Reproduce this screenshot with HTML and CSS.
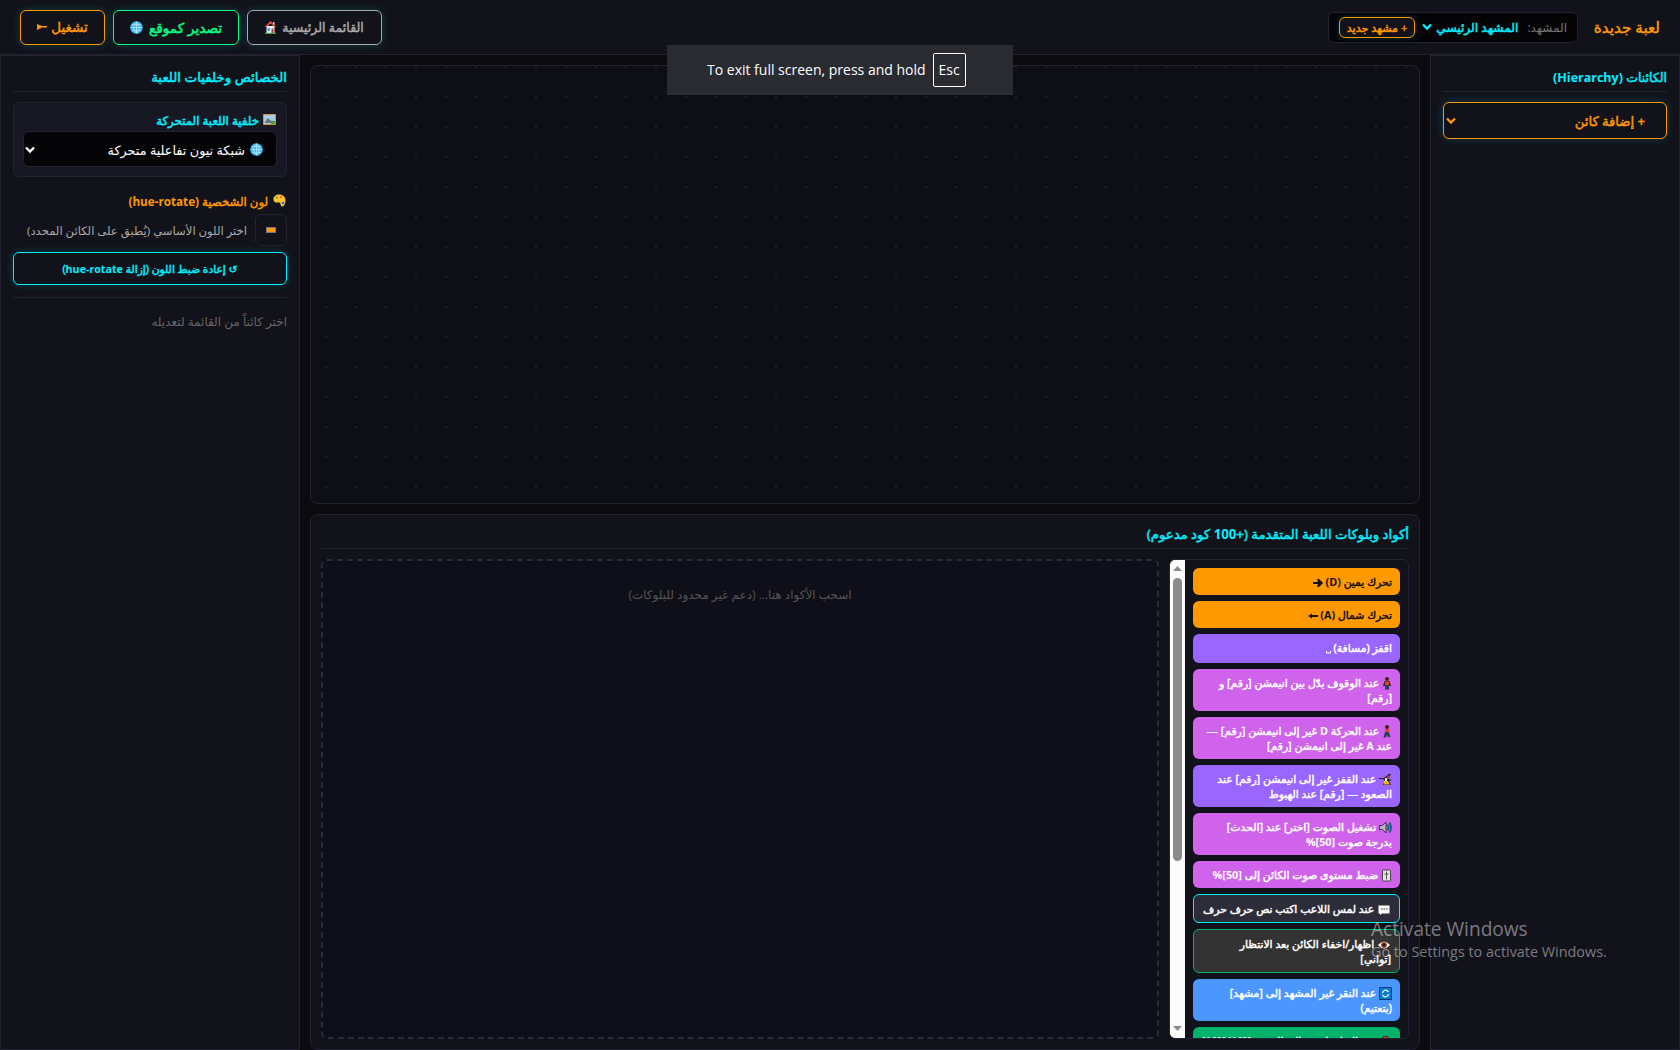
FILE: index.html
```html
<!DOCTYPE html>
<html lang="ar" dir="rtl">
<head>
    <meta charset="UTF-8">
    <title>لعبة جديدة</title>
    <link rel="stylesheet" href="styles.css">
</head>
<body>
    <svg class="defs" width="0" height="0">
        <symbol id="globe" viewBox="0 0 14 14">
            <circle cx="7" cy="7" r="6.8" fill="#35b5f0"/>
            <path d="M7 1v12M1 7h12M2 4h10M2 10h10M7 1C3 4 3 10 7 13M7 1c4 3 4 9 0 12" fill="none" stroke="#d5f2ff" stroke-width=".7"/>
        </symbol>
        <symbol id="chevron" viewBox="0 0 10 8">
            <path d="M1 1.500l4 4 4-4" fill="none" stroke="currentColor" stroke-width="2.300"/>
        </symbol>
    </svg>

    <header class="topbar">
        <div class="scene-side">
            <h1 class="game-title">لعبة جديدة</h1>
            <div class="scene-box">
                <span class="scene-label">المشهد:</span>
                <div class="scene-select"><span>المشهد الرئيسي</span><svg class="chev"><use href="#chevron"/></svg></div>
                <button class="new-scene">+ مشهد جديد</button>
            </div>
        </div>
        <div class="actions">
            <button class="btn btn-home"><span>القائمة الرئيسية</span>
                <svg class="ico-home" viewBox="0 0 11 13"><path d="M1.500 5h8v7h-8z" fill="#f4f4f4"/><path d="M8 1h1.500v4H8z" fill="#d8d8d8"/><path d="M0 5.500L5.500 0 11 5.500l-1 1-4.500-4-4.500 4z" fill="#e8503a"/><path d="M2.500 7h2.500v3H2.500z" fill="#3aa0dd"/><path d="M6.500 7.500h2V12h-2z" fill="#b33a2a"/><path d="M0 11.800h11V13H0z" fill="#37a35a"/></svg>
            </button>
            <button class="btn btn-export"><span>تصدير كموقع</span><svg class="ico"><use href="#globe"/></svg></button>
            <button class="btn btn-play"><span>تشغيل</span><svg class="ico-play" viewBox="0 0 10 6"><path d="M0 0l5 2h5v1.500H5L0 6z" fill="#ff9900"/></svg></button>
        </div>
    </header>

    <main class="workspace">
        <aside class="panel hierarchy">
            <h2 class="panel-title">الكائنات <b>(Hierarchy)</b></h2>
            <div class="add-object"><span>+ إضافة كائن</span><svg class="chev"><use href="#chevron"/></svg></div>
        </aside>

        <section class="center">
            <div class="stage"></div>
            <div class="code-box">
                <h2 class="code-title">أكواد وبلوكات اللعبة المتقدمة (+<b>100</b> كود مدعوم)</h2>
                <div class="code-body">
                    <div class="palette">
                        <div class="blocks">
                            <div class="block orange">تحرك يمين <b>(D)</b> <svg class="bi arrow" viewBox="0 0 10 8"><path d="M0 3h5L4 0h2l4 4-4 4H4l1-3H0z" fill="#111"/></svg></div>
                            <div class="block orange">تحرك شمال <b>(A)</b> <svg class="bi arrow" viewBox="0 0 10 8"><path d="M10 3H4V1.500L0 4l4 2.500V5h6z" fill="#111"/></svg></div>
                            <div class="block violet jump">اقفز (مسافة) <svg class="bi space" viewBox="0 0 5 3"><path d="M.5 0v2h4V0" fill="none" stroke="#fff"/></svg></div>
                            <div class="block pink"><svg class="bi man" viewBox="0 0 8 13"><circle cx="4" cy="2" r="2" fill="#3b2416"/><path d="M1.500 4h5L8 9H0z" fill="#3b2416"/><path d="M2 4.500h4V8H2z" fill="#d8442a"/><path d="M2 8h4v4.500H2z" fill="#24415f"/></svg> عند الوقوف بدّل بين انيمشن [رقم] و<br>[رقم]</div>
                            <div class="block pink"><svg class="bi man" viewBox="0 0 8 13"><circle cx="4" cy="2" r="2" fill="#3b2416"/><path d="M2 4h4v4H2z" fill="#d8442a"/><path d="M2 7h4l1.500 5H5L4 10l-1 2.500H.5z" fill="#24415f"/></svg> عند الحركة <b>D</b> غير إلى انيمشن [رقم] —<br>عند <b>A</b> غير إلى انيمشن [رقم]</div>
                            <div class="block violet"><svg class="bi" viewBox="0 0 13 13"><path d="M0 5h5l5-4h2L9 6l4 1-3 1 2 4H4l2-4-2-2H0z" fill="#2a2018"/><path d="M5 8h4l2 3.500H5z" fill="#f0b429"/><path d="M6 5h2v3H6z" fill="#f4eee0"/><path d="M8 4l2-2 0 2-2 2z" fill="#d94b30"/></svg> عند القفز غير إلى انيمشن [رقم] عند<br>الصعود — [رقم] عند الهبوط</div>
                            <div class="block pink"><svg class="bi" viewBox="0 0 13 12"><path d="M.5 4h3l3.500-3.500v11L3.500 8h-3z" fill="#b9b9b9" stroke="#222" stroke-width=".8"/><path d="M8.500 3q2 3 0 6M10.500 1q3 5 0 10" fill="none" stroke="#12607f" stroke-width="1.800"/></svg> تشغيل الصوت [اختر] عند [الحدث]<br>بدرجة صوت <b>[50]%</b></div>
                            <div class="block pink"><svg class="bi slider" viewBox="0 0 9 12"><rect x=".5" y=".5" width="8" height="11" rx="1" fill="#e4e4e4" stroke="#444"/><path d="M4.500 2v8M2.500 4.500h4" stroke="#555"/></svg> ضبط مستوى صوت الكائن إلى <b>[50]%</b></div>
                            <div class="block dark"><svg class="bi bubble" viewBox="0 0 12 10"><path d="M.5.500h11v8H4l-2 1.500V8.500H.5z" fill="#fff"/><path d="M3 4h1.500M5.500 4H7M8 4h1.500" stroke="#222" stroke-width="1.200"/></svg> عند لمس اللاعب اكتب نص حرف حرف</div>
                            <div class="block grey"><svg class="bi bubble" viewBox="0 0 12 10"><path d="M0 5q6-7 12 0-6 7-12 0z" fill="#fff"/><circle cx="6" cy="5" r="3" fill="#a34b25"/><circle cx="6" cy="5" r="1.400" fill="#111"/></svg> اظهار/اخفاء الكائن بعد الانتظار<br>[ثواني]</div>
                            <div class="block blue"><svg class="bi" viewBox="0 0 13 13"><path d="M.5.500h12v12H.5z" fill="#0b7bd0" stroke="#073d70"/><path d="M3.500 6a3 3 0 0 1 5-2l1 1M9.500 7a3 3 0 0 1-5 2l-1-1" fill="none" stroke="#fff" stroke-width="1.200"/></svg> عند النقر غير المشهد إلى [مشهد]<br>(بتعتيم)</div>
                            <div class="block green"><svg class="bi pin" viewBox="0 0 13 13"><circle cx="6.500" cy="4" r="3" fill="#e23b26" stroke="#3b1a12" stroke-width=".8"/></svg> عند البداية إذهب إلى الموقع <b>X [0] Y [0]</b></div>
                        </div>
                        <div class="scrollbar">
                            <svg class="sb-arrow" viewBox="0 0 9 5"><path d="M0 5l4.500-5L9 5z" fill="#8b8b8b"/></svg>
                            <div class="thumb"></div>
                            <svg class="sb-arrow last" viewBox="0 0 9 5"><path d="M0 0l4.500 5L9 0z" fill="#8b8b8b"/></svg>
                        </div>
                    </div>
                    <div class="dropzone">اسحب الأكواد هنا... (دعم غير محدود للبلوكات)</div>
                </div>
            </div>
        </section>

        <aside class="panel props">
            <h2 class="panel-title">الخصائص وخلفيات اللعبة</h2>
            <div class="bg-card">
                <h3 class="bg-label"><svg class="ico-pic" viewBox="0 0 13 11"><path d="M.5.500h12v10H.5z" fill="#a9cbe0" stroke="#c9973a"/><path d="M2 8l3-4 3 3 1-1 2 3H2z" fill="#67727a"/><path d="M8 7h4v3H8z" fill="#4f9a3f"/></svg><span>خلفية اللعبة المتحركة</span></h3>
                <div class="bg-select"><svg class="ico"><use href="#globe"/></svg><span>شبكة نيون تفاعلية متحركة</span><svg class="chev"><use href="#chevron"/></svg></div>
            </div>
            <h3 class="color-label"><svg class="ico-pal" viewBox="0 0 13 13"><path d="M6 .5c4 0 6.500 2.500 6.500 6 0 3-1.500 6-3.500 6-1.500 0-1-2-2-3.500S4 9 2.500 8.500-.5 5 1 3 4 .5 6 .5z" fill="#ffc02e"/><circle cx="4" cy="3.500" r="1.100" fill="#3aa655"/><circle cx="8" cy="3" r="1.100" fill="#e8503a"/><circle cx="10" cy="9" r="1.300" fill="#2d6fd2"/></svg><span>لون الشخصية <b>(hue-rotate)</b></span></h3>
            <div class="color-row">
                <div class="color-input"><i></i></div>
                <span>اختر اللون الأساسي (يُطبق على الكائن المحدد)</span>
            </div>
            <button class="reset-btn">↺ إعادة ضبط اللون (إزالة <b>hue-rotate</b>)</button>
            <p class="hint">اختر كائناً من القائمة لتعديله</p>
        </aside>
    </main>

    <div class="fs-toast" dir="ltr"><span>To exit full screen, press and hold</span><kbd>Esc</kbd></div>
    <div class="watermark" dir="ltr">
        <p class="wm-title">Activate Windows</p>
        <p class="wm-sub">Go to Settings to activate Windows.</p>
    </div>
</body>
</html>
```
FILE: styles.css
```css
* {
    box-sizing: border-box;
    margin: 0;
    padding: 0;
}
body {
    width: 1680px;
    height: 1050px;
    overflow: hidden;
    display: flex;
    flex-direction: column;
    background: #0a0a0f;
    color: #fff;
    font-family: "Open Sans", "DejaVu Sans", sans-serif;
    font-size: 13px;
    white-space: nowrap;
}
button {
    font-family: inherit;
    background: #12121a;
    cursor: pointer;
}
/* the Arabic bold face is too wide, so thicken the regular one */
.game-title, .scene-select, .new-scene, .btn, .panel-title, .add-object,
.code-title, .block, .bg-label, .color-label, .reset-btn {
    font-weight: normal;
    -webkit-text-stroke: 0.45px currentColor;
}
b {
    font-weight: bold;
    -webkit-text-stroke: 0;
}
.defs {
    position: absolute;
}
.topbar {
    height: 55px;
    flex: none;
    display: flex;
    justify-content: space-between;
    align-items: center;
    padding: 0 20px;
    background: #12121a;
    border-bottom: 1px solid #222230;
}
.scene-side, .actions, .scene-box, .scene-select {
    display: flex;
    align-items: center;
}
.scene-side {
    gap: 16px;
}
.game-title {
    width: 66px;
    font-size: 15.2px;
    color: #ff9900;
}
.scene-box {
    width: 250px;
    height: 31px;
    padding: 0 10px;
    background: #050508;
    border: 1px solid #222230;
    border-radius: 6px;
}
.scene-label {
    font-size: 12px;
    color: #777;
    margin-left: 9px;
}
.scene-select {
    gap: 4px;
    color: #00f0ff;
    font-size: 12.2px;
}
.chev {
    width: 10px;
    height: 8px;
    flex: none;
}
.new-scene {
    width: 76px;
    height: 21px;
    margin-right: auto;
    font-size: 11.1px;
    color: #ff9900;
    border: 1px solid #ff9900;
    border-radius: 6px;
    box-shadow: 0 0 5px rgba(0, 240, 255, 0.2);
}
.actions {
    gap: 8px;
}
.btn {
    height: 35px;
    display: flex;
    align-items: center;
    justify-content: center;
    gap: 6px;
    border: 1px solid;
    border-radius: 6px;
    box-shadow: 0 0 8px rgba(0, 240, 255, 0.2);
}
.btn-home {
    width: 135px;
    font-size: 12.6px;
    color: #aaa;
}
.btn-export {
    width: 126px;
    font-size: 13.7px;
    color: #00ff88;
    border-color: #00ff88;
}
.btn-play {
    width: 85px;
    gap: 4px;
    font-size: 13.4px;
    color: #ff9900;
    border-color: #ff9900;
}
.ico {
    width: 13px;
    height: 13px;
    flex: none;
}
.ico-home {
    width: 11px;
    height: 13px;
}
.ico-play {
    width: 10px;
    height: 6px;
}
.workspace {
    flex: 1;
    display: flex;
    min-height: 0;
}
.panel {
    flex: none;
    padding: 10px 12px;
    background: #12121a;
    border: 1px solid #222230;
}
.hierarchy {
    width: 250px;
}
.props {
    width: 300px;
}
.panel-title {
    height: 26px;
    line-height: 23px;
    font-size: 12.5px;
    color: #00f0ff;
    border-bottom: 1px solid #222230;
    margin-bottom: 10px;
}
.props .panel-title {
    font-size: 13.4px;
}
.add-object {
    height: 37px;
    display: flex;
    align-items: center;
    justify-content: space-between;
    padding: 0 21px 0 2px;
    font-size: 13.1px;
    color: #ff9900;
    border: 1px solid #ff9900;
    border-radius: 6px;
    box-shadow: 0 0 8px rgba(0, 240, 255, 0.2);
}
.center {
    flex: 1;
    min-width: 0;
    display: flex;
    flex-direction: column;
    gap: 10px;
    padding: 10px 10px 0;
}
.stage {
    height: 439px;
    border: 1px solid #222230;
    border-radius: 8px;
    background: radial-gradient(circle, #1e1e28 1px, transparent 1.5px) 0 -14px / 30px 30px #0e0e17;
}
.code-box {
    flex: 1;
    min-height: 0;
    display: flex;
    flex-direction: column;
    padding: 8px 10px 10px;
    background: #12121a;
    border: 1px solid #222230;
    border-radius: 8px;
}
.code-title {
    height: 26px;
    line-height: 22px;
    font-size: 13.25px;
    color: #00f0ff;
    border-bottom: 1px solid #222230;
    margin-bottom: 10px;
}
.code-body {
    flex: 1;
    min-height: 0;
    display: flex;
    gap: 10px;
}
.palette {
    width: 240px;
    flex: none;
    display: flex;
    border: 1px solid #222230;
    border-radius: 6px;
    overflow: hidden;
}
.blocks {
    flex: 1;
    min-width: 0;
    display: flex;
    flex-direction: column;
    gap: 6px;
    padding: 8px;
}
.block {
    flex: none;
    padding: 6px 8px;
    line-height: 15px;
    font-size: 10.8px;
    border-radius: 6px;
    color: #fff;
}
.block.orange { background: #ff9900; color: #111; }
.block.violet { background: #9966ff; }
.block.pink { background: #cf63ec; }
.block.dark { background: #2d2d3a; border: 1px solid #00f0ff; }
.block.grey { background: #333; border: 1px solid #00b36b; }
.block.blue { background: #4c97ff; }
.block.green { background: #00b36b; }
.block.jump {
    height: 29px;
}
.bi {
    width: 13px;
    height: 13px;
    vertical-align: -3px;
}
.bi.arrow {
    width: 10px;
    height: 8px;
    vertical-align: -1px;
}
.bi.space {
    width: 5px;
    height: 3px;
    vertical-align: -2px;
}
.bi.man {
    width: 8px;
    margin: 0 1px;
}
.bi.slider {
    width: 9px;
    margin: 0 1px;
}
.bi.bubble {
    width: 12px;
    height: 10px;
    margin: 0 1px;
    vertical-align: -2px;
}
.scrollbar {
    width: 15px;
    flex: none;
    display: flex;
    flex-direction: column;
    align-items: center;
    padding: 6px 0 7px;
    background: #fcfcfc;
}
.sb-arrow {
    width: 9px;
    height: 5px;
}
.thumb {
    width: 9px;
    height: 283px;
    margin-top: 7px;
    border-radius: 5px;
    background: #8b8b8b;
}
.sb-arrow.last {
    margin-top: auto;
}
.dropzone {
    flex: 1;
    padding-top: 24px;
    text-align: center;
    font-size: 12px;
    line-height: 20px;
    color: #555;
    background: #0f0f1a;
    border: 2px dashed #2a2a3d;
    border-radius: 6px;
}
.bg-card {
    height: 75px;
    padding: 5px 9px;
    background: #181824;
    border: 1px solid #222230;
    border-radius: 6px;
    margin-bottom: 12px;
}
.bg-label, .color-label {
    display: flex;
    align-items: center;
    height: 23px;
    font-size: 11.8px;
    color: #00f0ff;
    gap: 4px;
}
.ico-pic {
    width: 13px;
    height: 11px;
    margin-right: 1px;
}
.bg-select {
    height: 36px;
    display: flex;
    align-items: center;
    gap: 5px;
    padding: 1px 13px 0 1px;
    font-size: 12.8px;
    background: #050508;
    border: 1px solid #222230;
    border-radius: 6px;
}
.bg-select .chev {
    margin-right: auto;
}
.color-label {
    font-size: 11.7px;
    color: #ff9900;
    margin-bottom: 2px;
    gap: 5px;
}
.ico-pal {
    width: 13px;
    height: 13px;
    margin-right: 1px;
}
.color-row {
    display: flex;
    align-items: center;
    gap: 8px;
    font-size: 11.6px;
    color: #aaa;
    margin-bottom: 6px;
}
.color-input {
    width: 32px;
    height: 32px;
    display: flex;
    align-items: center;
    justify-content: center;
    border: 1px solid #222230;
    border-radius: 6px;
}
.color-input i {
    width: 10px;
    height: 6px;
    background: #ff9900;
    border: 1px solid #777;
}
.reset-btn {
    display: block;
    width: 100%;
    height: 33px;
    font-size: 10.7px;
    color: #00f0ff;
    border: 1px solid #00f0ff;
    border-radius: 6px;
    box-shadow: 0 0 8px rgba(0, 240, 255, 0.2);
}
.hint {
    margin-top: 12px;
    padding-top: 14px;
    line-height: 20px;
    font-size: 12px;
    color: #666;
    border-top: 1px solid #222230;
}
/* overlays */
.fs-toast {
    position: absolute;
    left: 667px;
    top: 45px;
    width: 346px;
    height: 50px;
    display: flex;
    align-items: center;
    gap: 7px;
    padding: 0 0 1px 40px;
    font-size: 14px;
    background: #292b31;
}
.fs-toast kbd {
    width: 33px;
    height: 34px;
    line-height: 32px;
    text-align: center;
    font-family: inherit;
    border: 1px solid #fff;
    border-radius: 2px;
}
.watermark {
    position: absolute;
    left: 1371px;
    top: 916px;
    color: rgba(255, 255, 255, 0.45);
}
.wm-title {
    font-size: 19.1px;
    line-height: 26px;
}
.wm-sub {
    font-size: 14.4px;
    line-height: 20px;
}
```
